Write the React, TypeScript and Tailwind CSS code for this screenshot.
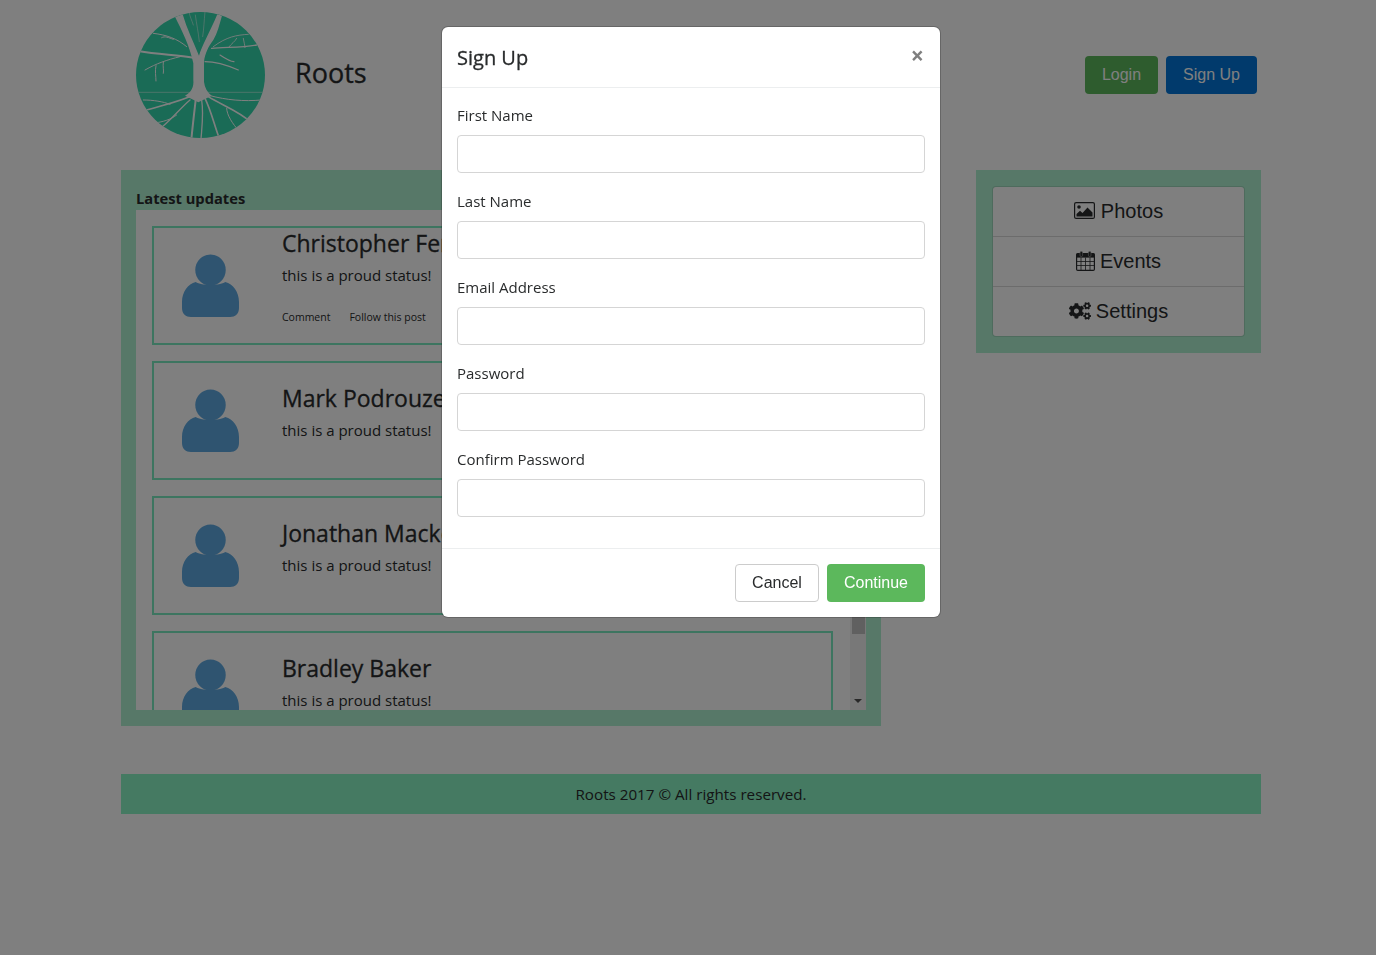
import { FaCogs } from 'react-icons/fa'

const BODY_FONT = "font-['Open_Sans','Noto_Sans',sans-serif]"
const ARIAL_FONT = "font-['Liberation_Sans',Arial,sans-serif]"

const FIELDS = ['First Name', 'Last Name', 'Email Address', 'Password', 'Confirm Password']

const POSTS = [
  { name: 'Christopher Fenwick', top: 'mt-0', actions: true },
  { name: 'Mark Podrouzek', top: 'mt-[20px]', actions: false },
  { name: 'Jonathan Mackenzie', top: 'mt-[20px]', actions: false },
  { name: 'Bradley Baker', top: 'mt-[20px]', actions: false },
]

function TreeLogo() {
  return (
    <svg width="129" height="126" viewBox="0 0 129 126" aria-label="Roots logo">
      <defs>
        <clipPath id="disc">
          <ellipse cx="64.5" cy="63" rx="64.5" ry="63" />
        </clipPath>
      </defs>
      <g clipPath="url(#disc)">
        <rect width="129" height="126" fill="#34d6ac" />
        <g transform="translate(-6 -7) scale(0.3333)" fill="none" stroke="#fff" strokeLinecap="round">
          <path
            fill="#fff"
            stroke="none"
            d="M135 35 L158 28 C170 70 190 110 207 152 C215 125 240 80 262 28 L276 32 C268 60 262 85 250 105 C235 125 225 145 222 170 L222 230 C224 248 232 262 245 272 L205 292 L165 272 C185 262 192 245 190 225 L190 175 C180 125 155 75 135 35 Z"
          />
          <path strokeWidth="6" d="M190 158 C140 148 90 150 25 138" />
          <path strokeWidth="3" d="M150 155 C110 165 80 175 45 195 M100 172 C98 185 102 195 100 205 M78 182 C74 200 78 212 78 228" />
          <path strokeWidth="3" d="M170 125 C140 100 110 90 70 85 M130 103 C115 98 105 92 95 98" />
          <path strokeWidth="3.5" d="M225 170 C260 170 290 180 325 195 M270 150 C285 160 300 170 312 170" />
          <path strokeWidth="4" d="M245 130 C280 125 330 130 380 120" />
          <path strokeWidth="2.5" d="M250 125 C290 95 320 90 355 88 M340 100 C342 112 345 122 345 128 M295 128 C305 115 315 110 320 100" />
          <path strokeWidth="1.5" d="M196 30 C200 60 205 80 208 110 M225 20 C222 50 222 70 218 95 M190 60 C185 45 180 35 178 25" />
          <path strokeWidth="1.5" d="M22 262 L402 262" />
          <path strokeWidth="5" d="M190 270 C150 290 100 300 40 318 M235 275 C275 300 330 320 360 350 M225 280 C245 320 255 370 270 405" />
          <path strokeWidth="6" d="M197 285 C192 330 187 370 183 415" />
          <path strokeWidth="4" d="M180 285 C150 310 120 350 85 375 M215 285 C222 330 215 370 212 415" />
          <path strokeWidth="3" d="M240 272 C290 285 340 290 395 285 M120 298 C100 290 70 285 40 285 M140 330 C120 345 100 350 70 355 M290 310 C290 330 310 360 325 375" />
        </g>
      </g>
    </svg>
  )
}

function Avatar() {
  return (
    <svg width="57" height="64" viewBox="0 0 58 64" preserveAspectRatio="none" className="shrink-0 mt-[26px]">
      <circle cx="29" cy="16" r="15.5" fill="#5fa9e0" />
      <path
        fill="#5fa9e0"
        d="M14 28 C20 32 38 32 44 28 C52 30 58 38 58 48 L58 54 C58 60 54 63 49 63 L9 63 C4 63 0 60 0 54 L0 48 C0 38 6 30 14 28 Z"
      />
    </svg>
  )
}

function PictureIcon() {
  return (
    <svg width="21" height="17" viewBox="0 0 21 17">
      <rect x="0.6" y="0.6" width="19.8" height="15.8" rx="1.5" fill="none" stroke="#292b2c" strokeWidth="1.2" />
      <circle cx="5" cy="5" r="1.8" fill="#292b2c" />
      <path fill="#292b2c" d="M2.5 14.5 V12 L6 8.8 L8.5 11 L13.5 5.5 L18.5 10.5 V14.5 Z" />
    </svg>
  )
}

function CalendarIcon() {
  return (
    <svg width="19" height="20" viewBox="0 0 19 20">
      <rect x="0.6" y="2.6" width="17.8" height="16.8" rx="1.2" fill="none" stroke="#292b2c" strokeWidth="1.2" />
      <rect x="0.6" y="2.6" width="17.8" height="4" fill="#292b2c" />
      <rect x="4" y="0.5" width="2.6" height="5" rx="1.2" fill="#292b2c" stroke="#b0b0b0" strokeWidth="0.6" />
      <rect x="12.4" y="0.5" width="2.6" height="5" rx="1.2" fill="#292b2c" stroke="#b0b0b0" strokeWidth="0.6" />
      <path stroke="#292b2c" strokeWidth="0.8" d="M5 6.5 V19 M9.5 6.5 V19 M14 6.5 V19 M1 10.5 H18 M1 14.5 H18" />
    </svg>
  )
}

function PostCard(props: { name: string; top: string; actions: boolean }) {
  return (
    <div className="flex h-[119px] w-[681px] shrink-0 border-2 border-[#7aeac0] pl-[28px]">
      <Avatar />
      <div className={`ml-[43px] text-[#292b2c] ${props.top}`}>
        <div className="h-[30px] text-[23px] leading-[30px] whitespace-nowrap [-webkit-text-stroke:0.3px]">{props.name}</div>
        <div className="mt-[5px] text-[15px] leading-[24px]">this is a proud status!</div>
        {props.actions ? (
          <div className="mt-[21px] flex gap-[19px] text-[10.5px] leading-[18px]">
            <span>Comment</span>
            <span>Follow this post</span>
          </div>
        ) : null}
      </div>
    </div>
  )
}

export default function App() {
  return (
    <div className={`relative min-h-[955px] bg-white ${BODY_FONT}`}>
      <div className="ml-[121px] w-[1140px] pt-[12px]">
        <header className="flex h-[158px] items-start pl-[15px]">
          <TreeLogo />
          <h1 className="ml-[30px] mt-[39px] text-[27px] leading-[44px] font-normal text-[#292b2c] [-webkit-text-stroke:0.3px]">Roots</h1>
          <div className={`ml-auto mr-[4px] mt-[44px] flex gap-[8px] text-[16px] text-white ${ARIAL_FONT}`}>
            <button type="button" className="h-[38px] w-[73px] rounded-[4px] bg-[#5cb85c]">Login</button>
            <button type="button" className="h-[38px] w-[91px] rounded-[4px] bg-[#0275d8]">Sign Up</button>
          </div>
        </header>

        <div className="flex items-start justify-between">
          <section className="w-[760px] bg-[#aef0d0] px-[15px] pb-[16px]">
            <h2 className="flex h-[40px] items-end text-[14.7px] leading-[23px] font-bold text-[#292b2c]">Latest updates</h2>
            <div className="flex h-[500px] overflow-hidden bg-white">
              <div className="flex w-[714px] flex-col gap-[16px] overflow-hidden py-[16px] pl-[16px]">
                {POSTS.map((post) => (
                  <PostCard key={post.name} {...post} />
                ))}
              </div>
              <div className="flex w-[16px] flex-col items-center bg-[#f1f1f1]">
                <div className="h-[424px] w-[13px] bg-[#c1c1c1]" />
                <div className="mt-auto mb-[7px] h-0 w-0 border-x-[4px] border-t-[4px] border-x-transparent border-t-[#505050]" />
              </div>
            </div>
          </section>

          <aside className="w-[285px] bg-[#aef0d0] p-[16px]">
            <ul className={`rounded-[4px] border border-black/10 bg-white bg-clip-padding text-[20px] text-[#292b2c] ${ARIAL_FONT}`}>
              <li className="flex h-[50px] items-center justify-center gap-[6px] border-b border-[#d9d9d9] pb-[2px]">
                <PictureIcon />
                Photos
              </li>
              <li className="flex h-[50px] items-center justify-center gap-[5px] border-b border-[#d9d9d9] pb-[2px]">
                <CalendarIcon />
                Events
              </li>
              <li className="flex h-[49px] items-center justify-center gap-[5px] pb-[2px]">
                <FaCogs size={22} />
                Settings
              </li>
            </ul>
          </aside>
        </div>

        <footer className="mt-[48px] flex h-[40px] items-center justify-center bg-[#8af4c4] text-[15.2px] text-[#292b2c]">
          Roots 2017 © All rights reserved.
        </footer>
      </div>

      <div className="fixed inset-0 bg-black/50">
        <div className="ml-[442px] mt-[27px] w-[498px] rounded-[6px] bg-white text-[#292b2c] shadow-[0_0_0_1px_rgba(0,0,0,0.2)]">
          <div className="flex h-[61px] items-center justify-between border-b border-[#eceeef] pl-[15px] pr-[16px]">
            <h3 className="mt-[2px] text-[20px] leading-[30px] font-normal [-webkit-text-stroke:0.3px]">Sign Up</h3>
            <span className="-mt-[3px] text-[23px] leading-none font-bold text-[#7f7f7f]">×</span>
          </div>
          <form className="flex flex-col gap-[16px] px-[15px] pt-[15px] pb-[31px]">
            {FIELDS.map((field) => (
              <label key={field} className="block text-[15px] leading-[24px]">
                {field}
                <input
                  type={field.includes('Password') ? 'password' : 'text'}
                  className="mt-[8px] block h-[38px] w-full rounded-[4px] border border-[#d5d5d5] bg-white"
                />
              </label>
            ))}
          </form>
          <div className={`flex h-[69px] items-center justify-end gap-[8px] border-t border-[#eceeef] pr-[15px] text-[16px] ${ARIAL_FONT}`}>
            <button type="button" className="h-[38px] w-[84px] rounded-[4px] border border-[#cccccc] bg-white">Cancel</button>
            <button type="button" className="h-[38px] w-[98px] rounded-[4px] bg-[#5cb85c] text-white">Continue</button>
          </div>
        </div>
      </div>
    </div>
  )
}
